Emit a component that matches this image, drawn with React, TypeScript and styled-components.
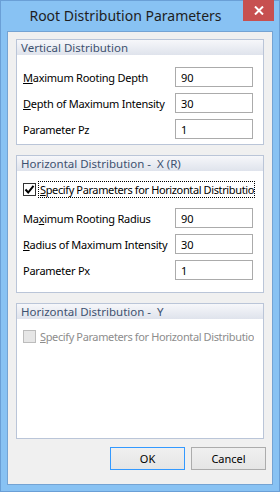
import { ReactNode } from 'react';
import styled, { createGlobalStyle } from 'styled-components';

interface IField {
    label: ReactNode;
    value: string;
}

interface IGroup {
    title: string;
    grow?: boolean;
    children: ReactNode;
}

const Mn = ({ children }: { children: ReactNode }) => <u>{children}</u>;

const Group = ({ title, grow, children }: IGroup) => (
    <StyledGroup $grow={grow}>
        <StyledGroupHeader>{title}</StyledGroupHeader>
        {children}
    </StyledGroup>
);

const Field = ({ label, value }: IField) => (
    <StyledRow>
        <StyledLabel>{label}</StyledLabel>
        <StyledInput defaultValue={value} />
    </StyledRow>
);

const CheckMark = () => (
    <svg width="11" height="11" viewBox="0 0 11 11">
        <path d="M1.5 5.5 L4.2 8.5 L9.5 1.8" fill="none" stroke="#000" strokeWidth="2" />
    </svg>
);

const App = () => {
    return (
        <>
            <GlobalStyle />
            <StyledWindow>
                <StyledTitleBar>
                    <StyledTitle>Root Distribution Parameters</StyledTitle>
                    <StyledClose>
                        <svg width="10" height="9" viewBox="0 0 10 9">
                            <path d="M1 0.5 L9 8.5 M9 0.5 L1 8.5" stroke="#fff" strokeWidth="2" />
                        </svg>
                    </StyledClose>
                </StyledTitleBar>
                <StyledClient>
                    <Group title="Vertical Distribution">
                        <StyledGroupBody $top={12} $bottom={5} $gap={6}>
                            <Field label={<><Mn>M</Mn>aximum Rooting Depth</>} value="90" />
                            <Field label={<><Mn>D</Mn>epth of Maximum Intensity</>} value="30" />
                            <Field label="Parameter Pz" value="1" />
                        </StyledGroupBody>
                    </Group>
                    <Group title={'Horizontal Distribution -\u00a0 X (R)'}>
                        <StyledGroupBody $top={10} $bottom={12} $gap={10}>
                            <StyledCheckRow>
                                <StyledBox>
                                    <CheckMark />
                                </StyledBox>
                                <StyledCheckText $focused>
                                    <Mn>S</Mn>pecify Parameters for Horizontal Distribution
                                </StyledCheckText>
                            </StyledCheckRow>
                            <StyledFieldList>
                                <Field label={<>Ma<Mn>x</Mn>imum Rooting Radius</>} value="90" />
                                <Field label={<><Mn>R</Mn>adius of Maximum Intensity</>} value="30" />
                                <Field label="Parameter Px" value="1" />
                            </StyledFieldList>
                        </StyledGroupBody>
                    </Group>
                    <Group title={'Horizontal Distribution -\u00a0 Y'} grow>
                        <StyledGroupBody $top={9} $bottom={0} $gap={0}>
                            <StyledCheckRow>
                                <StyledBox $disabled />
                                <StyledCheckText $disabled>
                                    <Mn>S</Mn>pecify Parameters for Horizontal Distribution
                                </StyledCheckText>
                            </StyledCheckRow>
                        </StyledGroupBody>
                    </Group>
                    <StyledButtons>
                        <StyledButton $default>OK</StyledButton>
                        <StyledButton>Cancel</StyledButton>
                    </StyledButtons>
                </StyledClient>
            </StyledWindow>
        </>
    );
};

const GlobalStyle = createGlobalStyle`
    html, body {
        margin: 0;
        padding: 0;
    }
    body {
        font-family: "Noto Sans", "Open Sans", sans-serif;
        font-size: 11px;
        letter-spacing: -0.25px;
        color: #000;
    }
    * {
        box-sizing: border-box;
    }
`;

const StyledWindow = styled.div`
    width: 280px;
    height: 492px;
    display: flex;
    flex-direction: column;
    background: #88c2f3;
    border: 1px solid #6a9fd6;
`;

const StyledTitleBar = styled.div`
    height: 30px;
    display: flex;
    align-items: flex-start;
    padding-left: 7px;
    padding-right: 5px;
`;

const StyledTitle = styled.div`
    flex: 1;
    text-align: center;
    font-size: 14px;
    letter-spacing: 0;
    line-height: 30px;
    color: #1e1e1e;
`;

const StyledClose = styled.div`
    width: 31px;
    height: 21px;
    margin-top: -1px;
    background: #c75050;
    display: flex;
    align-items: center;
    justify-content: center;
`;

const StyledClient = styled.div`
    flex: 1;
    margin: 0 6px 6px;
    border: 1px solid #74a3d3;
    background: #f0f0f0;
    display: flex;
    flex-direction: column;
    padding: 7px 8px 14px;
    gap: 10px;
`;

const StyledGroup = styled.div<{ $grow?: boolean }>`
    display: flex;
    flex-direction: column;
    background: #fff;
    border: 1px solid #bac5d8;
    flex: ${(p) => (p.$grow ? 1 : 'none')};
`;

const StyledGroupHeader = styled.div`
    height: 15px;
    line-height: 15px;
    padding-left: 4px;
    font-size: 11.5px;
    letter-spacing: 0;
    color: #3d5170;
    background: linear-gradient(#f6f7fa, #dfe3ec);
    white-space: pre;
`;

const StyledGroupBody = styled.div<{ $top: number; $bottom: number; $gap: number }>`
    display: flex;
    flex-direction: column;
    gap: ${(p) => p.$gap}px;
    padding: ${(p) => p.$top}px 10px ${(p) => p.$bottom}px 6px;
`;

const StyledFieldList = styled.div`
    display: flex;
    flex-direction: column;
    gap: 6px;
`;

const StyledRow = styled.div`
    display: flex;
    align-items: center;
    height: 20px;
`;

const StyledLabel = styled.span`
    flex: 1;
    white-space: nowrap;
`;

const StyledInput = styled.input`
    width: 78px;
    height: 20px;
    border: 1px solid #ababab;
    padding: 0 5px;
    font: inherit;
    color: #000;
    background: #fff;
    outline: none;
`;

const StyledCheckRow = styled.div`
    display: flex;
    align-items: center;
    height: 17px;
    gap: 2px;
    margin-right: -2px;
`;

const StyledBox = styled.span<{ $disabled?: boolean }>`
    width: 13px;
    height: 13px;
    flex: none;
    display: flex;
    align-items: center;
    justify-content: center;
    border: 1px solid ${(p) => (p.$disabled ? '#bcbcbc' : '#333')};
    background: ${(p) => (p.$disabled ? '#e6e6e6' : '#fff')};
`;

const StyledCheckText = styled.span<{ $focused?: boolean; $disabled?: boolean }>`
    flex: 1;
    min-width: 0;
    height: 17px;
    line-height: 15px;
    overflow: hidden;
    white-space: nowrap;
    padding-left: 1px;
    letter-spacing: -0.38px;
    color: ${(p) => (p.$disabled ? '#8d8d8d' : '#000')};
    border: 1px dotted ${(p) => (p.$focused ? '#000' : 'transparent')};
`;

const StyledButtons = styled.div`
    display: flex;
    justify-content: flex-end;
    gap: 6px;
    margin-top: -2px;
    margin-right: -2px;
`;

const StyledButton = styled.button<{ $default?: boolean }>`
    width: 75px;
    height: 23px;
    font: inherit;
    color: #000;
    background: linear-gradient(#f0f0f0, #e5e5e5);
    border: 1px solid ${(p) => (p.$default ? '#3399ff' : '#acacac')};
    padding: 0;
`;

export default App;
